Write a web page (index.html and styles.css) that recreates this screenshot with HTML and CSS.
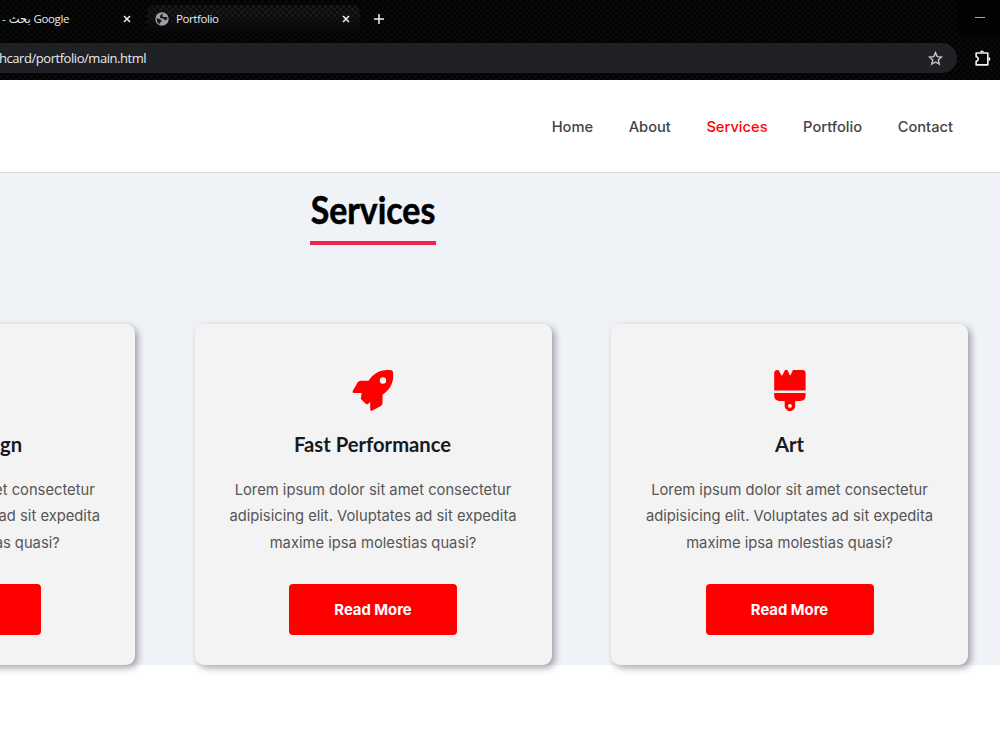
FILE: index.html
```html
<!DOCTYPE html>
<html lang="en">
<head>
    <meta charset="UTF-8">
    <meta name="viewport" content="width=device-width, initial-scale=1.0">
    <title>Portfolio</title>
    <link rel="stylesheet" href="styles.css">
</head>
<body>
    <div class="browser">
        <div class="tabs">
            <div class="tab tab-first">
                <span class="tab-title">- بحث Google</span>
                <svg class="close" viewBox="0 0 8 8"><path d="M1 1l6 6M7 1l-6 6"/></svg>
            </div>
            <div class="tab active">
                <svg class="globe" viewBox="0 0 14 14">
                    <circle cx="7" cy="7" r="6.7" fill="#9aa0a6"/>
                    <path d="M8.4 1.6L5.5 3 4.8 5.4 6.5 6.4 8.6 6.6 9.3 8.2 11.7 7.7 12.5 5.6 10.8 4.9 8.3 5 7.3 3.9ZM1.5 6.6L4.6 7 6.6 8.4 6.3 10 4.9 10.6 4.6 12.2 2.4 10.3Z" fill="#17181a"/>
                </svg>
                <span class="tab-title">Portfolio</span>
                <svg class="close" viewBox="0 0 8 8"><path d="M1 1l6 6M7 1l-6 6"/></svg>
            </div>
            <svg class="plus" viewBox="0 0 10 10"><path d="M5 0v10M0 5h10"/></svg>
            <div class="window-buttons"><span class="minimize"></span></div>
        </div>
        <div class="toolbar">
            <div class="address">
                <span class="url">hcard/portfolio/main.html</span>
                <svg class="star" viewBox="0 0 14 14"><path d="M7 1.5l1.6 3.7 4 .4-3 2.7.9 3.9L7 10.2l-3.5 2 .9-3.9-3-2.7 4-.4z"/></svg>
            </div>
            <svg class="extensions" viewBox="0 0 16 16">
                <path d="M2 2.8h11v11.2H2v-3.4c2.6-.4 2.6-3.9 0-4.3z"/>
                <path class="knob" d="M5.7 2.2a1.8 1.8 0 0 1 3.6 0zM13.6 6.7a1.8 1.8 0 0 1 0 3.6z"/>
            </svg>
        </div>
    </div>

    <header>
        <nav>
            <a href="#">Home</a>
            <a href="#">About</a>
            <a href="#" class="current">Services</a>
            <a href="#">Portfolio</a>
            <a href="#">Contact</a>
        </nav>
    </header>

    <section class="services">
        <div class="container">
            <h2><span>Services</span></h2>
            <div class="cards">
                <div class="card">
                    <div class="icon"></div>
                    <h3><span>Unique Design</span></h3>
                    <p>Lorem ipsum dolor sit amet consectetur adipisicing elit. Voluptates ad sit expedita maxime ipsa molestias quasi?</p>
                    <a href="#" class="btn">Read More</a>
                </div>
                <div class="card">
                    <div class="icon">
                        <svg viewBox="0 0 42 42">
                            <path fill-rule="evenodd" d="M39 .2Q40.8.4 41 2.2C42.2 11.5 39 19 30.5 24.8V33C30.5 34.7 29.5 35.5 28 36.5L20.5 40.5Q18.2 41.5 18.2 39V32L15.7 34.2Q14.8 34.6 14 34L9.3 29.5Q8.6 28.7 8.9 27.8L9.7 23.1H2.2Q-.2 23 .9 20.8L5 13.5C6 11.7 7 10.8 8.8 10.8H16.5C22.3 2.3 30-.9 39 .2ZM34.2 10.5a3.2 3.2 0 1 0-6.4 0a3.2 3.2 0 1 0 6.4 0Z"/>
                        </svg>
                    </div>
                    <h3><span>Fast Performance</span></h3>
                    <p>Lorem ipsum dolor sit amet consectetur adipisicing elit. Voluptates ad sit expedita maxime ipsa molestias quasi?</p>
                    <a href="#" class="btn">Read More</a>
                </div>
                <div class="card">
                    <div class="icon">
                        <svg viewBox="0 0 42 42">
                            <path fill-rule="evenodd" d="M8.5 0H9.6L12.2 5Q12.9 6 13.5 5L16 0H18.4L20.6 4.8Q21.2 5.8 21.8 4.8L24 0H33.5Q36.6 0 36.6 3.1V20.6H5.2V3.1Q5.2 0 8.5 0ZM5.2 23.1H36.6V25.6Q36.6 30.9 31.3 30.9H26.2V35.9A5.25 5.25 0 0 1 15.7 35.9V30.9H10.5Q5.2 30.9 5.2 25.6ZM22.9 35.9a1.95 1.95 0 1 0-3.9 0a1.95 1.95 0 1 0 3.9 0Z"/>
                        </svg>
                    </div>
                    <h3><span>Art</span></h3>
                    <p>Lorem ipsum dolor sit amet consectetur adipisicing elit. Voluptates ad sit expedita maxime ipsa molestias quasi?</p>
                    <a href="#" class="btn">Read More</a>
                </div>
            </div>
        </div>
    </section>
</body>
</html>
```
FILE: styles.css
```css
* {
    box-sizing: border-box;
    margin: 0;
    padding: 0;
}
html {
    height: 100%;
    overflow: hidden;
}
body {
    min-height: 100vh;
    font-family: Inter, "Liberation Sans", sans-serif;
    background-color: #fff;
}
a {
    text-decoration: none;
}

/* browser */
.browser {
    height: 80px;
    background: repeating-conic-gradient(#0a0a0a 0 25%, #020202 0 50%) 0 0 / 6px 6px;
    font-family: "Open Sans", "DejaVu Sans", sans-serif;
    color: #e8eaed;
}
.tabs {
    height: 43px;
    display: flex;
    align-items: center;
    padding-bottom: 6px;
}
.tab {
    height: 27px;
    display: flex;
    align-items: center;
    font-size: 11.5px;
}
.tab-title {
    letter-spacing: -.4px;
}
.tab-first {
    width: 147px;
    padding: 0 16px 0 2px;
}
.tab.active {
    width: 213px;
    padding: 0 10px 0 8px;
    border-radius: 8px 8px 0 0;
    background: linear-gradient(rgba(10, 10, 10, 0) 40%, #070707), repeating-conic-gradient(#161718 0 25%, #0c0c0d 0 50%) 0 0 / 6px 6px;
}
.globe {
    width: 14px;
    height: 14px;
    margin-right: 7px;
}
.close {
    width: 8px;
    height: 8px;
    margin-left: auto;
}
.close path,
.plus path {
    stroke: #f1f1f1;
    stroke-width: 1.5;
    fill: none;
}
.plus {
    width: 10px;
    height: 10px;
    margin-left: 14px;
}
.window-buttons {
    width: 42px;
    height: 37px;
    margin-left: auto;
    padding: 17px 0 0 17px;
    background-color: #020202;
}
.minimize {
    display: block;
    width: 10px;
    height: 1px;
    background-color: #aaa;
}
.toolbar {
    display: flex;
    align-items: center;
    height: 37px;
    padding-bottom: 7px;
}
.address {
    width: 957px;
    height: 30px;
    display: flex;
    align-items: center;
    justify-content: space-between;
    padding-right: 14px;
    background-color: #202124;
    border-radius: 0 15px 15px 0;
    font-size: 13px;
}
.url {
    margin-left: -1px;
    letter-spacing: -.45px;
}
.star {
    width: 15px;
    height: 15px;
}
.star path {
    fill: none;
    stroke: #c4c7c5;
    stroke-width: 1.3;
}
.extensions {
    width: 17px;
    height: 17px;
    margin-left: 17px;
}
.extensions path {
    fill: none;
    stroke: #f1f1f1;
    stroke-width: 1.5;
    stroke-linejoin: round;
}
.extensions .knob {
    fill: #f1f1f1;
    stroke: none;
}

/* header */
header {
    height: 93px;
    background-color: #fff;
    border-bottom: 1px solid #d8dbdd;
}
nav {
    height: 100%;
    display: flex;
    align-items: center;
    justify-content: flex-end;
    gap: 35.5px;
    padding: 2px 47px 0 0;
}
nav a {
    font-size: 14.7px;
    font-weight: 500;
    color: #444;
}
nav a.current {
    color: #f00;
}

/* services */
.services {
    height: 492px;
    background-color: #eff3f8;
}
.container {
    width: 1190px;
    margin-left: -222px;
    display: flex;
    flex-direction: column;
    align-items: center;
}
h2, h3 {
    font-family: Lato, "Open Sans", sans-serif;
    white-space: nowrap;
}
h2 {
    width: 126px;
    height: 72px;
    display: flex;
    justify-content: center;
    padding-top: 13px;
    font-size: 38px;
    line-height: 46px;
    color: #000;
    border-bottom: 4px solid #ee2450;
}
h2 span {
    transform: scaleX(.89);
    -webkit-text-stroke: .6px #000;
}
.cards {
    display: grid;
    grid-template-columns: repeat(3, 357px);
    gap: 59.5px;
    margin-top: 79px;
}
.card {
    height: 341px;
    display: flex;
    flex-direction: column;
    align-items: center;
    padding: 46px 30px 0;
    background-color: #f3f3f3;
    border-radius: 9px;
    box-shadow: 3px 3px 7px rgba(0, 0, 0, .35);
    text-align: center;
}
.icon {
    width: 42px;
    height: 42px;
}
.icon svg {
    display: block;
    fill: #f00;
}
h3 {
    margin-top: 17px;
    font-size: 21.5px;
    line-height: 30px;
    color: #18191f;
}
h3 span {
    display: block;
    transform: scaleX(.94);
}
.card p {
    margin-top: 17.5px;
    font-size: 14.75px;
    line-height: 26.5px;
    color: #555;
}
.btn {
    width: 168px;
    height: 50.5px;
    margin-top: 28px;
    background-color: #f00;
    border-radius: 4px;
    color: #fff;
    font-size: 14.8px;
    font-weight: 700;
    line-height: 52px;
}
```
